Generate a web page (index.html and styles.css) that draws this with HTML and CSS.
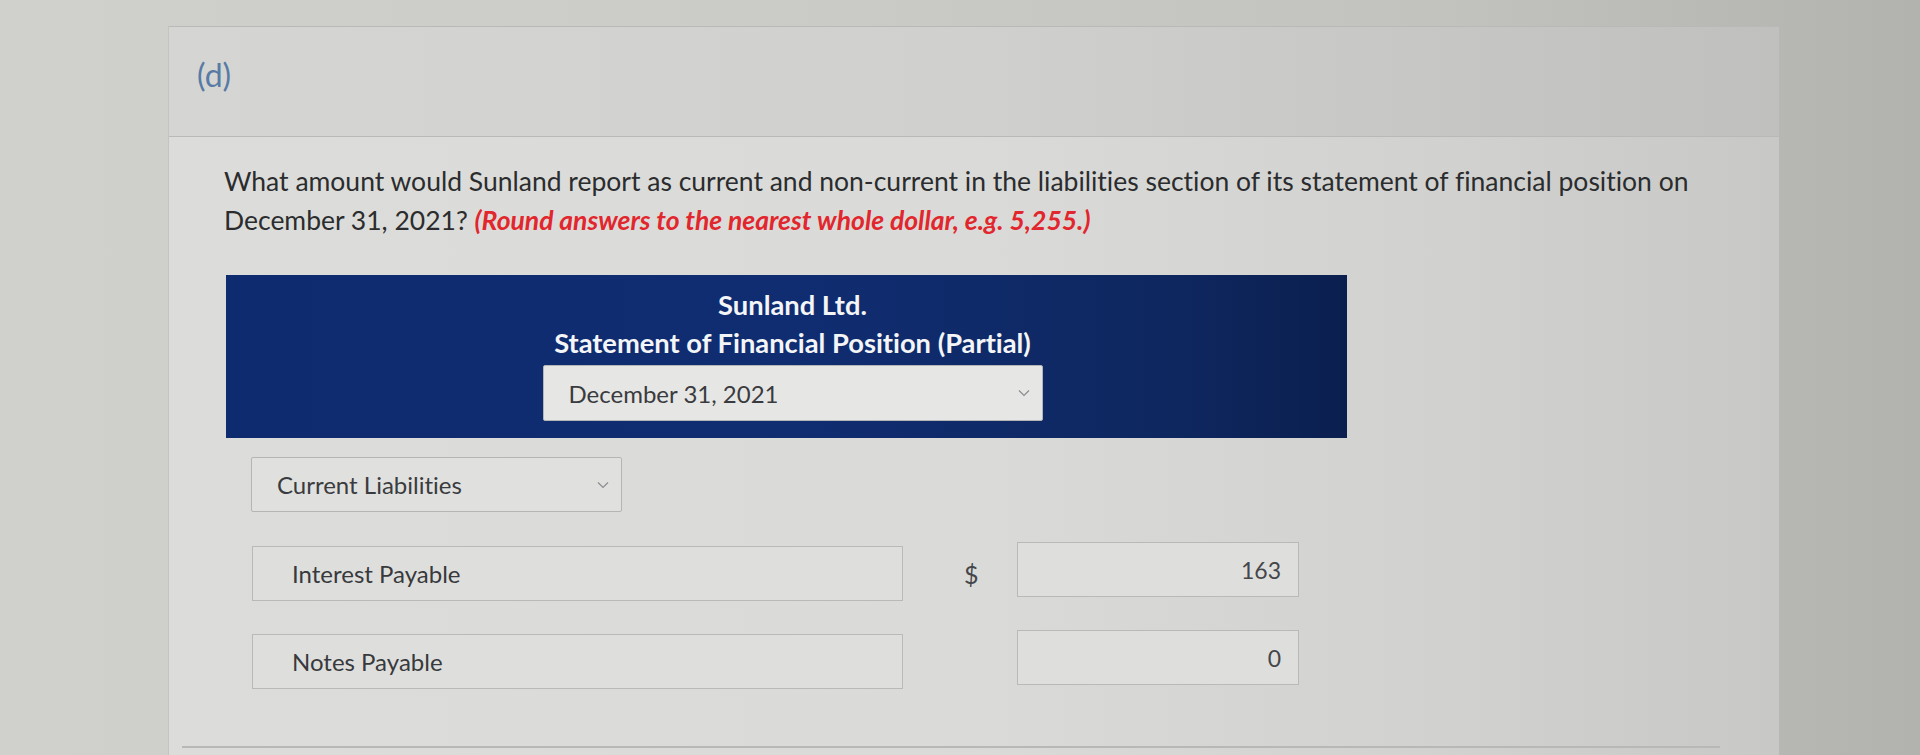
FILE: index.html
```html
<!DOCTYPE html>
<html>
<head>
<meta charset="utf-8">
<link rel="stylesheet" href="styles.css">
</head>
<body>
<div class="page">
  <div class="card">
    <div class="card-head"><span class="part">(d)</span></div>
    <div class="card-body">
      <p class="question">What amount would Sunland report as current and non-current in the liabilities section of its statement of financial position on December 31, 2021? <em class="hint">(Round answers to the nearest whole dollar, e.g. 5,255.)</em></p>
      <div class="statement">
        <div class="st-title">Sunland Ltd.</div>
        <div class="st-title">Statement of Financial Position (Partial)</div>
        <div class="select date-select"><span>December 31, 2021</span><svg class="chev" viewBox="0 0 12 8" width="12" height="8"><path d="M1 1.5 L6 6.5 L11 1.5" fill="none" stroke="#8a8c90" stroke-width="1.2"/></svg></div>
      </div>
      <div class="select section-select"><span>Current Liabilities</span><svg class="chev" viewBox="0 0 12 8" width="12" height="8"><path d="M1 1.5 L6 6.5 L11 1.5" fill="none" stroke="#8a8c90" stroke-width="1.2"/></svg></div>
      <div class="row">
        <div class="label-box">Interest Payable</div>
        <div class="cur">$</div>
        <div class="amount">163</div>
      </div>
      <div class="row">
        <div class="label-box">Notes Payable</div>
        <div class="cur"></div>
        <div class="amount">0</div>
      </div>
    </div>
  </div>
  <div class="next-line"></div>
</div>
</body>
</html>
```
FILE: styles.css
```css
html, body {
  margin: 0;
  padding: 0;
}
body {
  width: 1920px;
  height: 755px;
  overflow: hidden;
  font-family: Lato, "Open Sans", sans-serif;
  font-variant-ligatures: no-common-ligatures;
  background: linear-gradient(to right, #d0d0cc 0%, #cbccc8 40%, #c2c3bf 75%, #b2b3af 100%);
}
.page {
  padding-top: 26px;
  position: relative;
  height: 729px;
}
.card {
  margin-left: 168px;
  width: 1610px;
  height: 740px;
  border-top: 1px solid #b9bab7;
  border-right: 1px solid #b7b8b5;
  border-left: 1px solid #c4c5c1;
  background: linear-gradient(to right, #dcddda 0%, #dadbd8 50%, #d1d2cf 80%, #c8c9c6 100%);
}
.card-head {
  height: 110px;
  display: flex;
  align-items: center;
  padding-left: 28px;
  box-sizing: border-box;
  border-bottom: 1px solid #b9bab7;
  background: linear-gradient(to right, #d5d6d3 0%, #d0d1ce 50%, #c6c7c4 80%, #c0c1be 100%);
}
.part {
  font-size: 32px;
  color: #587aa6;
  margin-top: -14px;
}
.card-body {
  padding: 25px 0 0 55px;
}
.question {
  margin: 0;
  font-size: 26.5px;
  line-height: 39px;
  color: #2b2c2e;
  width: 1500px;
}
.hint {
  color: #e2262d;
  font-style: italic;
  font-weight: 700;
}
.statement {
  margin: 35px 0 0 2px;
  width: 1121px;
  height: 163px;
  box-sizing: border-box;
  padding: 11px 0 0 12px;
  background: linear-gradient(to right, #0f2b70 0%, #102d72 50%, #0e275f 85%, #0b1f4f 100%);
  display: flex;
  flex-direction: column;
  align-items: center;
}
.st-title {
  color: #f4f5f7;
  font-weight: 700;
  font-size: 27.3px;
  line-height: 38px;
}
.select {
  display: flex;
  align-items: center;
  justify-content: space-between;
  box-sizing: border-box;
  background: #e6e7e5;
  border: 1px solid #b4b6b5;
  border-radius: 2px;
  font-size: 24px;
  color: #3a3b3e;
}
.date-select {
  margin-top: 3px;
  width: 500px;
  height: 56px;
  padding: 0 12px 0 25px;
}
.section-select {
  margin: 19px 0 0 27px;
  width: 371px;
  height: 55px;
  padding: 0 12px 0 25px;
  background: #e0e1de;
}
.chev {
  display: block;
}
.row {
  display: flex;
  align-items: center;
  margin: 34px 0 0 28px;
}
.row + .row {
  margin-top: 33px;
}
.label-box {
  width: 651px;
  height: 55px;
  box-sizing: border-box;
  border: 1px solid #b9bab8;
  background: #dedfdc;
  display: flex;
  align-items: center;
  padding-left: 39px;
  font-size: 24px;
  color: #38393c;
}
.cur {
  width: 114px;
  box-sizing: border-box;
  padding-left: 61px;
  font-size: 25px;
  color: #45464a;
}
.amount {
  width: 282px;
  height: 55px;
  margin-top: -8px;
  box-sizing: border-box;
  border: 1px solid #b9bab8;
  background: #dedfdc;
  display: flex;
  align-items: center;
  justify-content: flex-end;
  padding-right: 17px;
  font-size: 23px;
  color: #45464a;
}
.next-line {
  position: absolute;
  left: 182px;
  top: 746px;
  width: 1538px;
  height: 2px;
  background: #b8b9b6;
}
```
